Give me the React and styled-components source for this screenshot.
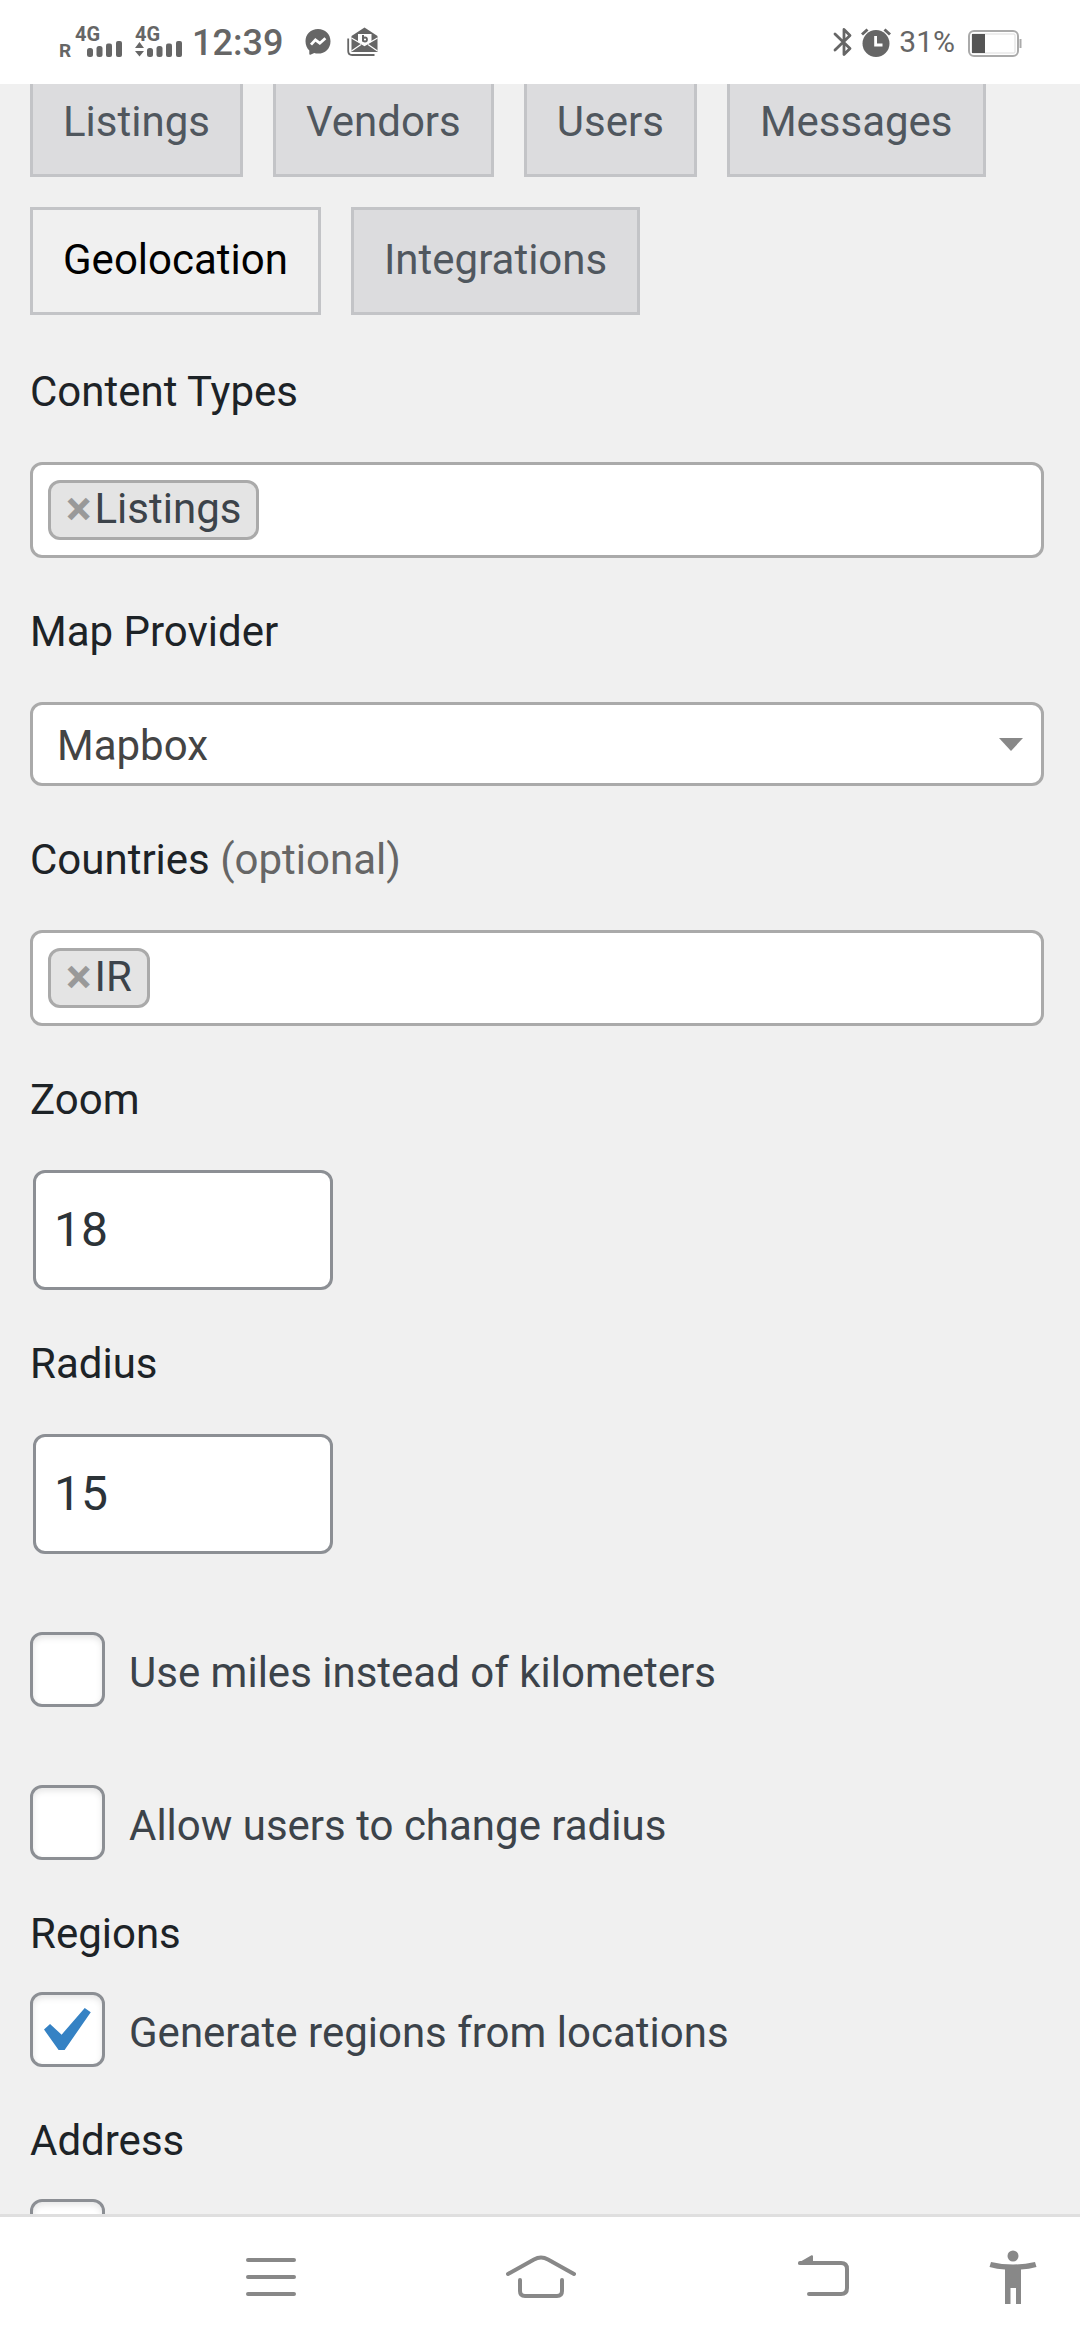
import { useState } from "react"
import styled, { createGlobalStyle } from "styled-components"

const tabs = ["Listings", "Vendors", "Users", "Messages", "Geolocation", "Integrations"]

const Signals = () => (
  <svg width="130" height="54" viewBox="-6 -12 130 54" fill="#666" fontFamily="Roboto, sans-serif" fontSize="20" fontWeight="700">
    <text x="-1" y="30" fontSize="19">R</text>
    <text x="15" y="14">4G</text>
    <rect x="27" y="21" width="6" height="9" rx="2.5" />
    <rect x="36.5" y="19" width="6" height="11" rx="2.5" />
    <rect x="46" y="16.5" width="6" height="13.5" rx="2" />
    <rect x="56" y="14" width="6" height="16" rx="2" />
    <text x="75" y="14">4G</text>
    <path d="M75 21 L79.5 15 L84 21 Z M75 24 H84 L79.5 29.5 Z" />
    <rect x="87" y="21" width="6" height="9" rx="2.5" />
    <rect x="96.5" y="19" width="6" height="11" rx="2.5" />
    <rect x="106" y="16.5" width="6" height="13.5" rx="2" />
    <rect x="116" y="14" width="6" height="16" rx="2" />
  </svg>
)

const MessengerIcon = () => (
  <svg width="26" height="30" viewBox="0 0 26 30">
    <path d="M13 2 C20.2 2 25.5 7.2 25.5 14.2 C25.5 21.5 20 26.6 13 26.6 C11.6 26.6 10.4 26.4 9.2 26 L5.4 27.8 C4.8 28 4.3 27.6 4.3 27 V23.6 C2 21.3 0.5 18 0.5 14.2 C0.5 7.2 5.8 2 13 2 Z" fill="#666" />
    <path d="M6 17.6 L10.4 12.8 L14.8 16.2 L20.4 11.2" fill="none" stroke="#fff" strokeWidth="2.8" />
  </svg>
)

const MailIcon = () => (
  <svg width="32" height="30" viewBox="0 0 32 30">
    <path d="M1.2 11.5 V24 Q1.2 28 5.2 28 H27.5" fill="none" stroke="#666" strokeWidth="1.8" />
    <path d="M4.5 9 L17.5 0.5 L30.5 9 V25 H4.5 Z" fill="#666" />
    <path d="M11 7 H24.5 V14.5 L17.5 18.5 L11 14.5 Z" fill="#fff" />
    <path d="M4.5 11 L17.5 18.5 L30.5 11 M4.5 24 L14 17.5 M30.5 24 L21 17.5" fill="none" stroke="#fff" strokeWidth="1.2" />
    <path d="M16 8 V14.5" stroke="#666" strokeWidth="2" />
    <circle cx="18" cy="12.5" r="2" fill="none" stroke="#666" strokeWidth="1.8" />
  </svg>
)

const BluetoothIcon = () => (
  <svg width="20" height="30" viewBox="0 0 20 30" fill="none" stroke="#666" strokeWidth="2.8" strokeLinejoin="round" strokeLinecap="round">
    <path d="M2 7 L17 21.5 L11 27.5 V2.5 L17 8.5 L2 23" />
  </svg>
)

const AlarmIcon = () => (
  <svg width="30" height="30" viewBox="0 0 30 30">
    <circle cx="15" cy="16.5" r="13.5" fill="#666" />
    <path d="M1 7.5 L6.5 2.5 M29 7.5 L23.5 2.5" stroke="#666" strokeWidth="3" />
    <path d="M14.6 9 V18 H21.5" fill="none" stroke="#fff" strokeWidth="2.8" />
  </svg>
)

const BatteryIcon = () => (
  <svg width="54" height="30" viewBox="0 0 54 30">
    <rect x="1" y="4" width="49" height="25" rx="5" fill="#fff" stroke="#aaa" strokeWidth="2" />
    <rect x="4" y="7" width="43" height="19" rx="1" fill="none" stroke="#ddd" />
    <rect x="4" y="7" width="13" height="19" fill="#555" />
    <path d="M52.5 12 V21" stroke="#aaa" strokeWidth="2" />
  </svg>
)

const MenuIcon = () => (
  <svg width="52" height="44" viewBox="0 0 52 44" stroke="#888" strokeWidth="4" strokeLinecap="round">
    <path d="M4 5 H50 M4 22 H50 M4 39 H50" />
  </svg>
)

const HomeIcon = () => (
  <svg width="72" height="44" viewBox="0 0 72 44" fill="none" stroke="#888" strokeWidth="4" strokeLinecap="round">
    <path d="M4 19 L30 4.5 Q37 0.5 44 4.5 L70 19" />
    <path d="M16 25 V36 Q16 41 21 41 H53 Q58 41 58 36 V25" />
  </svg>
)

const BackIcon = () => (
  <svg width="78" height="44" viewBox="0 0 78 44" fill="none" stroke="#888" strokeWidth="4" strokeLinecap="round">
    <path d="M29 8 H70 Q76 8 76 14 V33 Q76 39 70 39 H38" />
    <path d="M28 8.5 L41 1.2 V8.5 Z" fill="#888" strokeWidth="2" strokeLinejoin="round" />
  </svg>
)

const PersonIcon = () => (
  <svg width="48" height="54" viewBox="0 0 48 54" fill="#888">
    <circle cx="24" cy="6" r="5.5" />
    <path d="M2 12 Q24 17 46 12 L47.5 17 Q40 19 32 19.5 V54 H27 V38 H21.5 V54 H16 V19.5 Q8 19 0.5 17 Z" />
  </svg>
)

const TagField = ({ id, label, optional, initial }) => {
  const [tags, setTags] = useState(initial)

  return (
    <Field>
      <Label htmlFor={id}>
        {label}{optional && <Optional> (optional)</Optional>}
      </Label>
      <TagBox>
        {tags.map((tag) => (
          <Tag key={tag}>
            <Remove
              type="button"
              aria-label={`Remove ${tag}`}
              onClick={() => setTags(tags.filter((t) => t !== tag))}
            >
              ×
            </Remove>
            {tag}
          </Tag>
        ))}
        <TagInput id={id} type="text" />
      </TagBox>
    </Field>
  )
}

const NumberField = ({ id, label, value }) => (
  <Field>
    <Label htmlFor={id}>{label}</Label>
    <NumberInput id={id} type="text" inputMode="numeric" defaultValue={value} />
  </Field>
)

const App = () => {
  const [active, setActive] = useState("Geolocation")

  return (
    <Screen>
      <GlobalStyle />
      <StatusBar>
        <StatusGroup>
          <Signals />
          <Clock>12:39</Clock>
          <Notices>
            <MessengerIcon />
            <MailIcon />
          </Notices>
        </StatusGroup>
        <StatusGroup>
          <BluetoothIcon />
          <AlarmIcon />
          <Percent>31%</Percent>
          <BatteryIcon />
        </StatusGroup>
      </StatusBar>

      <Content>
        <Tabs>
          {tabs.map((tab) => (
            <Tab
              key={tab}
              href={`#${tab.toLowerCase()}`}
              $active={tab === active}
              onClick={() => setActive(tab)}
            >
              {tab}
            </Tab>
          ))}
        </Tabs>

        <TagField id="content-types" label="Content Types" initial={["Listings"]} />
        <Field>
          <Label htmlFor="map-provider">Map Provider</Label>
          <Select id="map-provider" defaultValue="Mapbox">
            <option>Mapbox</option>
          </Select>
        </Field>
        <TagField id="countries" label="Countries" optional initial={["IR"]} />
        <NumberField id="zoom" label="Zoom" value="18" />
        <NumberField id="radius" label="Radius" value="15" />

        <CheckRow $spaced>
          <Checkbox type="checkbox" />
          <CheckText>Use miles instead of kilometers</CheckText>
        </CheckRow>
        <CheckRow $spaced>
          <Checkbox type="checkbox" />
          <CheckText>Allow users to change radius</CheckText>
        </CheckRow>

        <Group>
          <Legend>Regions</Legend>
          <CheckRow>
            <Checkbox type="checkbox" defaultChecked />
            <CheckText>Generate regions from locations</CheckText>
          </CheckRow>
        </Group>
        <Group>
          <Legend>Address</Legend>
          <CheckRow>
            <Checkbox type="checkbox" aria-label="Address" />
          </CheckRow>
        </Group>
      </Content>

      <NavBar>
        <NavButton type="button" aria-label="Menu"><MenuIcon /></NavButton>
        <NavButton type="button" aria-label="Home"><HomeIcon /></NavButton>
        <NavButton type="button" aria-label="Back"><BackIcon /></NavButton>
        <NavButton type="button" aria-label="Accessibility"><PersonIcon /></NavButton>
      </NavBar>
    </Screen>
  )
}

export default App


const GlobalStyle = createGlobalStyle`
  * {
    box-sizing: border-box;
  }
  body {
    margin: 0;
    background: #f0f0f0;
    color: #3c434a;
    font-family: Roboto, sans-serif;
    font-size: 42px;
    line-height: 60px;
  }
  svg {
    display: block;
    flex-shrink: 0;
  }
`

const Screen = styled.div`
  display: flex;
  flex-direction: column;
  height: 100vh;
`

const StatusBar = styled.header`
  display: flex;
  justify-content: space-between;
  align-items: center;
  flex-shrink: 0;
  height: 84px;
  padding: 0 58px 0 54px;
  background: #fff;
  color: #666;
  z-index: 1;
`

const StatusGroup = styled.div`
  display: flex;
  align-items: center;
  gap: 8px;
`

const Clock = styled.span`
  padding-top: 2px;
  font-size: 36px;
  font-weight: 500;
`

const Notices = styled.div`
  display: flex;
  gap: 16px;
  padding-left: 14px;
`

const Percent = styled.span`
  padding-right: 5px;
  font-size: 30px;
`

const Content = styled.main`
  flex: 1;
  min-height: 0;
  padding: 0 36px 0 30px;
  overflow: hidden;
`

const Tabs = styled.nav`
  display: flex;
  flex-wrap: wrap;
  gap: 30px;
  margin-top: -15px;
  margin-bottom: 3px;
`

const Tab = styled.a`
  padding: 20px 30px 22px;
  border: 3px solid #c3c4c7;
  background: ${({ $active }) => ($active ? "#f0f0f0" : "#dcdcde")};
  color: ${({ $active }) => ($active ? "#000" : "#50575e")};
  text-decoration: none;
`

const Field = styled.div`
  padding-top: 44px;
`

const Label = styled.label`
  display: block;
  margin-bottom: 40px;
  color: #1d2327;
`

const Optional = styled.span`
  color: #666;
`

const TagBox = styled.div`
  display: flex;
  align-items: center;
  height: 96px;
  padding: 0 15px;
  border: 3px solid #aaa;
  border-radius: 12px;
  background: #fff;
`

const Tag = styled.span`
  display: flex;
  align-items: center;
  height: 60px;
  padding: 0 15px 2px;
  border: 3px solid #aaa;
  border-radius: 12px;
  background: #e4e4e4;
`

const Remove = styled.button`
  margin: 0 3px 0 0;
  padding: 0;
  border: 0;
  background: none;
  color: #999;
  font: inherit;
  font-size: 48px;
  font-weight: 700;
`

const TagInput = styled.input`
  flex: 1;
  min-width: 0;
  border: 0;
  outline: 0;
  background: none;
  font: inherit;
`

const Select = styled.select`
  display: block;
  width: 100%;
  height: 84px;
  padding: 3px 60px 0 24px;
  border: 3px solid #aaa;
  border-radius: 12px;
  appearance: none;
  background: #fff url("data:image/svg+xml,%3Csvg xmlns='http://www.w3.org/2000/svg' viewBox='0 0 24 13'%3E%3Cpath d='M0 0h24L12 13z' fill='%23888'/%3E%3C/svg%3E") no-repeat right 18px center / 24px 13px;
  color: #444;
  font: inherit;
`

const NumberInput = styled.input`
  display: block;
  width: 300px;
  height: 120px;
  margin: 0 3px;
  padding: 0 18px 2px;
  border: 3px solid #8c8f94;
  border-radius: 12px;
  background: #fff;
  color: #2c3338;
  font: inherit;
  font-size: 48px;
`

const CheckRow = styled.label`
  display: flex;
  align-items: center;
  gap: 24px;
  margin-top: ${({ $spaced }) => ($spaced ? "78px" : "28px")};
`

const Checkbox = styled.input`
  flex-shrink: 0;
  width: 75px;
  height: 75px;
  margin: 0;
  border: 3px solid #8c8f94;
  border-radius: 12px;
  appearance: none;
  background-color: #fff;
  box-shadow: inset 0 3px 6px rgba(0, 0, 0, 0.1);

  &:checked {
    background-image: url("data:image/svg+xml,%3Csvg xmlns='http://www.w3.org/2000/svg' viewBox='0 0 20 20'%3E%3Cpath d='M14.83 4.89l1.34.94-5.81 8.38H9.02L5.78 9.67l1.34-1.25 2.57 2.4z' fill='%233582c4'/%3E%3C/svg%3E");
    background-repeat: no-repeat;
    background-position: -15px -9px;
    background-size: 90px 90px;
  }
`

const CheckText = styled.span`
  padding-top: 6px;
`

const Group = styled.fieldset`
  margin: 0;
  padding: 44px 0 0;
  border: 0;
`

const Legend = styled.legend`
  float: left;
  width: 100%;
  padding: 0;
  color: #1d2327;

  & + * {
    clear: both;
    padding-top: 28px;
    margin-top: 0;
  }
`

const NavBar = styled.nav`
  display: grid;
  grid-template-columns: 1fr 2fr 2fr 2fr 1fr;
  flex-shrink: 0;
  height: 126px;
  padding-bottom: 3px;
  border-top: 3px solid #dfdfdf;
  background: #fff;
`

const NavButton = styled.button`
  display: flex;
  justify-content: center;
  align-items: center;
  padding: 0;
  border: 0;
  background: none;

  &:first-child {
    grid-column-start: 2;
  }
`
